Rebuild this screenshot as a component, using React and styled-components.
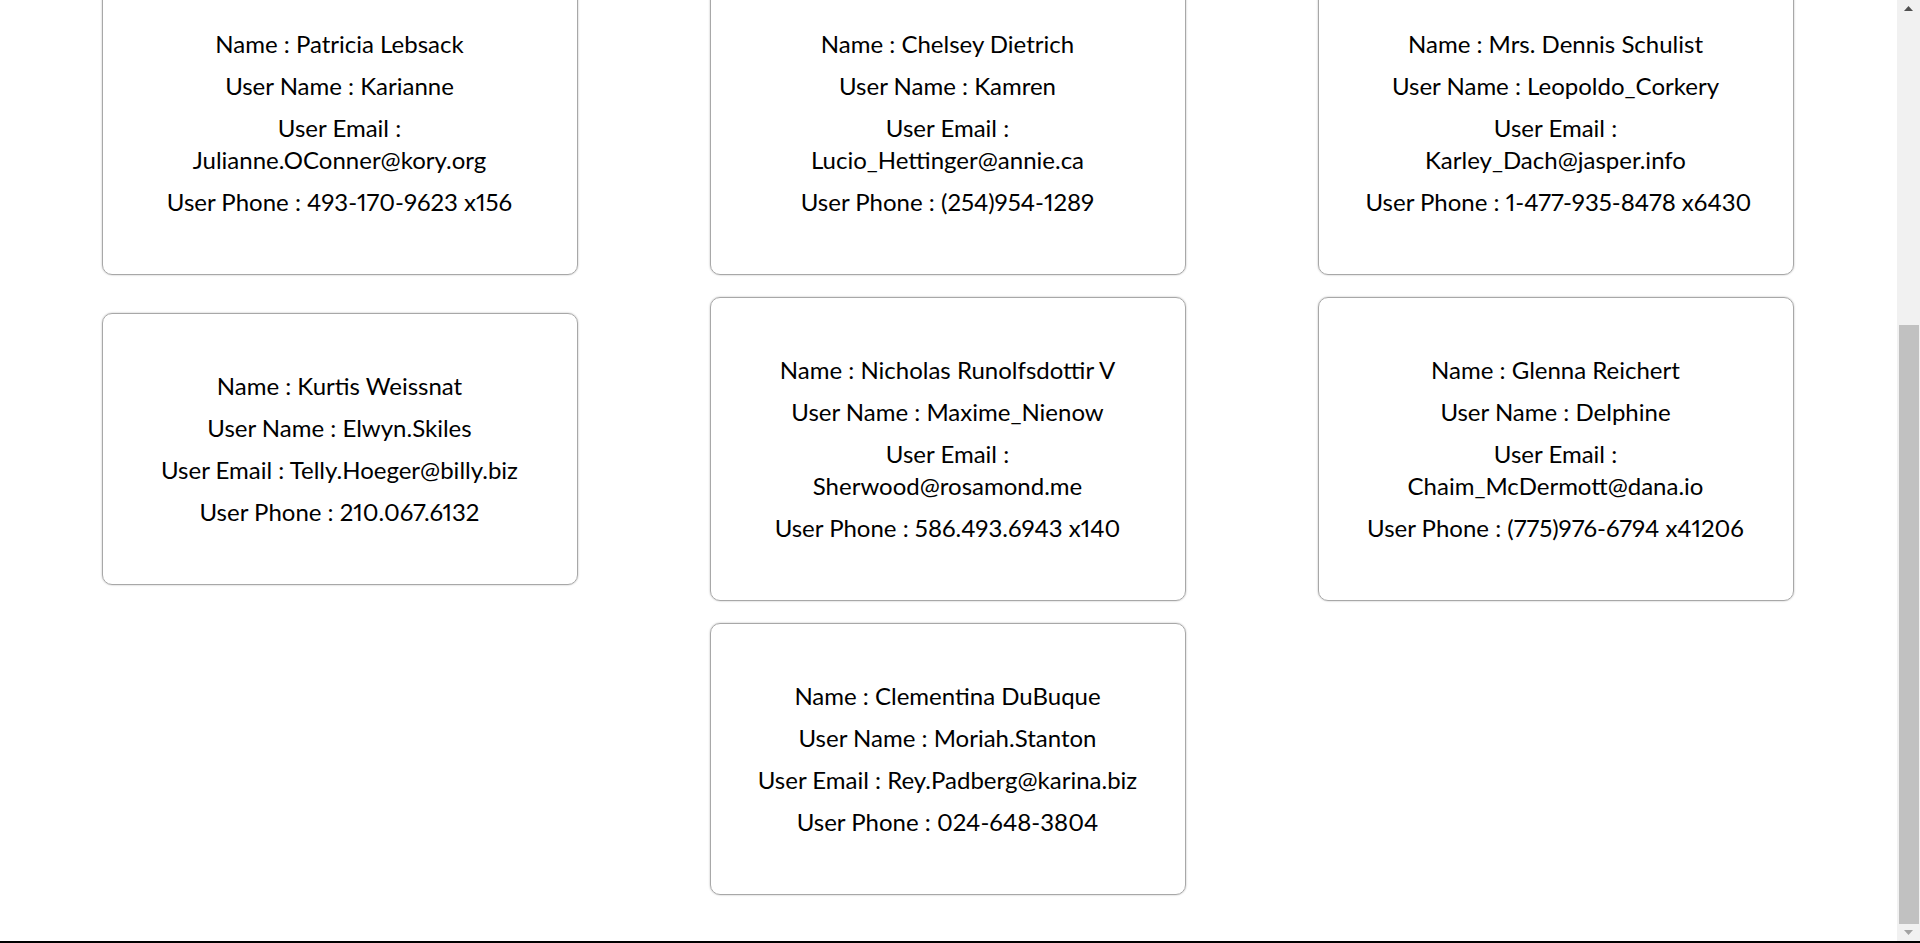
import { useLayoutEffect, useRef, useState } from "react";
import styled, { createGlobalStyle } from "styled-components";

const GlobalStyle = createGlobalStyle`
  * { box-sizing: border-box; }
  body {
    margin: 0;
    background: #fff;
    color: #000;
    font-family: Lato, "Open Sans", sans-serif;
  }
`;

const users = [
  { id: 1, name: "Leanne Graham", username: "Bret", email: "Sincere@april.biz", phone: "1-770-736-8031 x56442" },
  { id: 2, name: "Ervin Howell", username: "Antonette", email: "Shanna@melissa.tv", phone: "010-692-6593 x09125" },
  { id: 3, name: "Clementine Bauch", username: "Samantha", email: "Nathan@yesenia.net", phone: "1-463-123-4447" },
  { id: 4, name: "Patricia Lebsack", username: "Karianne", email: "Julianne.OConner@kory.org", phone: "493-170-9623 x156" },
  { id: 5, name: "Chelsey Dietrich", username: "Kamren", email: "Lucio_Hettinger@annie.ca", phone: "(254)954-1289" },
  { id: 6, name: "Mrs. Dennis Schulist", username: "Leopoldo_Corkery", email: "Karley_Dach@jasper.info", phone: "1-477-935-8478 x6430" },
  { id: 7, name: "Kurtis Weissnat", username: "Elwyn.Skiles", email: "Telly.Hoeger@billy.biz", phone: "210.067.6132" },
  { id: 8, name: "Nicholas Runolfsdottir V", username: "Maxime_Nienow", email: "Sherwood@rosamond.me", phone: "586.493.6943 x140" },
  { id: 9, name: "Glenna Reichert", username: "Delphine", email: "Chaim_McDermott@dana.io", phone: "(775)976-6794 x41206" },
  { id: 10, name: "Clementina DuBuque", username: "Moriah.Stanton", email: "Rey.Padberg@karina.biz", phone: "024-648-3804" },
];

const BUTTON = 17;

export default function App() {
  const mainRef = useRef(null);
  const trackRef = useRef(null);
  const [thumb, setThumb] = useState({ top: 0, height: 0 });

  const syncThumb = () => {
    const el = mainRef.current;
    const track = trackRef.current;
    if (!el || !track) return;
    const len = track.clientHeight;
    setThumb({
      top: (len * el.scrollTop) / el.scrollHeight,
      height: (len * el.clientHeight) / el.scrollHeight,
    });
  };

  // the list is looked at scrolled down to the last card
  useLayoutEffect(() => {
    const el = mainRef.current;
    el.scrollTop = el.scrollHeight;
    syncThumb();
  }, []);

  return (
    <>
      <GlobalStyle />
      <Shell>
        <Main ref={mainRef} onScroll={syncThumb}>
          <Header>
            <h1>User List</h1>
          </Header>
          <CardList>
            {users.map((user) => (
              <UserCard key={user.id}>
                <Info>Name : {user.name}</Info>
                <Info>User Name : {user.username}</Info>
                <Info>User Email : {user.email}</Info>
                <Info $nowrap>User Phone : {user.phone}</Info>
              </UserCard>
            ))}
          </CardList>
        </Main>
        <ScrollRail>
          <RailButton>
            <svg width="9" height="5" viewBox="0 0 9 5">
              <path d="M0 5 L4.5 0 L9 5 Z" fill="#505050" />
            </svg>
          </RailButton>
          <Track ref={trackRef}>
            <Thumb style={{ top: thumb.top, height: thumb.height }} />
          </Track>
          <RailButton>
            <svg width="9" height="5" viewBox="0 0 9 5">
              <path d="M0 0 L4.5 5 L9 0 Z" fill="#a3a3a3" />
            </svg>
          </RailButton>
        </ScrollRail>
      </Shell>
    </>
  );
}

const Shell = styled.div`
  display: flex;
  height: 100vh;
  border-bottom: 2px solid #000;
`;

const Main = styled.main`
  flex: 1;
  overflow-y: auto;
  scrollbar-width: none;
  &::-webkit-scrollbar {
    display: none;
  }
`;

const ScrollRail = styled.div`
  width: 23px;
  display: flex;
  flex-direction: column;
  background: #f1f1f1;
`;

const RailButton = styled.div`
  height: ${BUTTON}px;
  display: flex;
  align-items: center;
  justify-content: center;
`;

const Track = styled.div`
  flex: 1;
  position: relative;
`;

const Thumb = styled.div`
  position: absolute;
  left: 2px;
  right: 1px;
  background: #c1c1c1;
`;

const Header = styled.header`
  height: 162px;
  display: flex;
  align-items: center;
  justify-content: center;
  h1 {
    margin: 0;
    font-size: 32px;
    font-weight: bold;
  }
`;

const CardList = styled.div`
  display: flex;
  flex-wrap: wrap;
  justify-content: center;
  align-items: center;
  gap: 22px 132px;
  padding: 0 2px 46px 0;
`;

const UserCard = styled.div`
  width: 476px;
  padding: 56px 47px;
  display: flex;
  flex-direction: column;
  gap: 10px;
  border: 1px solid #a8a8a8;
  border-radius: 10px;
  box-shadow: 0 0 2px rgba(0, 0, 0, 0.3);
  text-align: center;
`;

const Info = styled.p`
  margin: 0;
  font-size: 24px;
  line-height: 32px;
  color: #000;
  font-variant-numeric: proportional-nums;
  white-space: ${({ $nowrap }) => ($nowrap ? "nowrap" : "normal")};
`;
